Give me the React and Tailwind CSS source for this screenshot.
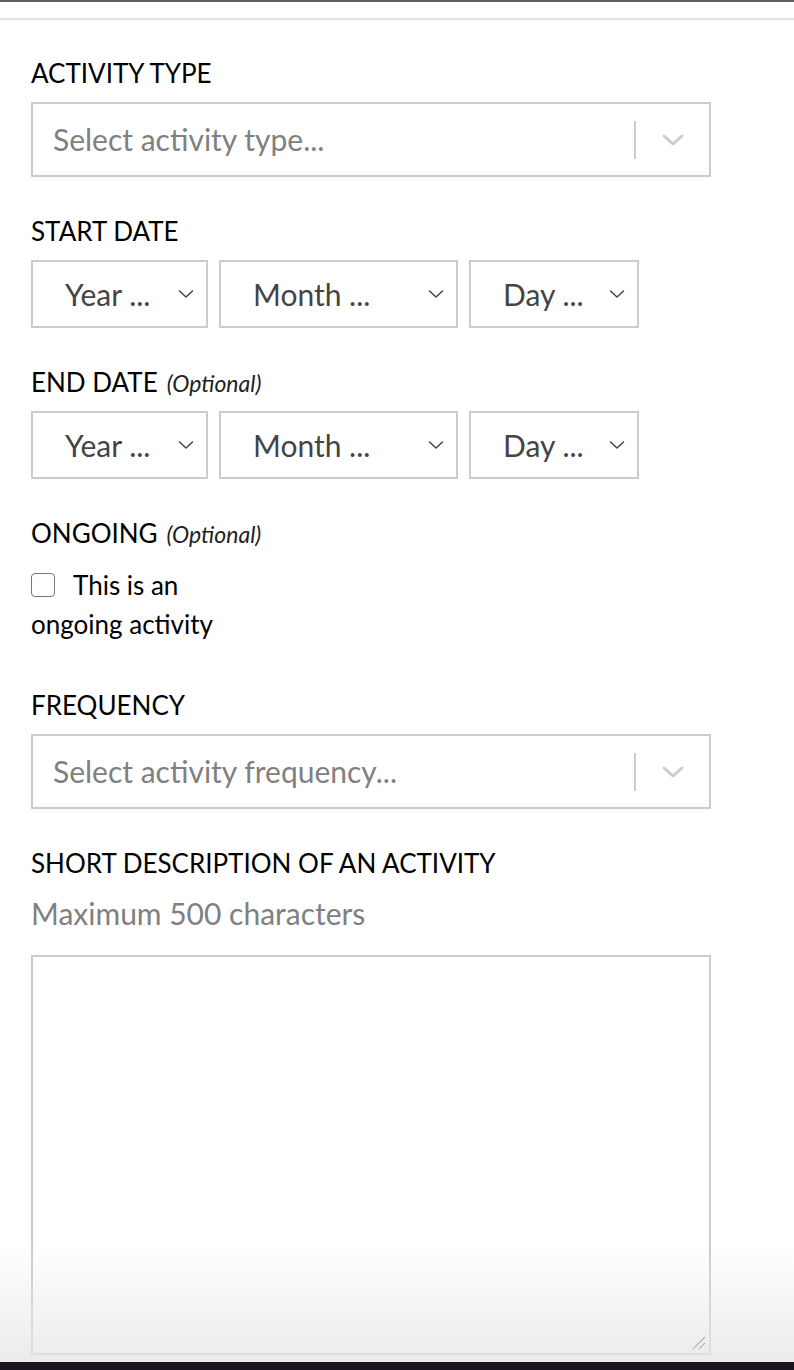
import React from "react";

const font = { fontFamily: "Lato, 'Open Sans', sans-serif" };

const Label = ({ children, optional }) => (
  <div className="h-[30px] leading-[30px] text-[26px] text-black flex items-baseline">
    <span>{children}</span>
    {optional && (
      <span className="ml-[9px] text-[23px] italic text-[#222]">(Optional)</span>
    )}
  </div>
);

const BigSelect = ({ placeholder }) => (
  <div className="w-[680px] h-[75px] border-2 border-[#cccccc] bg-white flex items-center">
    <div className="flex-1 pl-[20px] text-[30px] text-[#808080]">{placeholder}</div>
    <div className="w-[2px] h-[38px] bg-[#cccccc]" />
    <div className="w-[73px] flex justify-center">
      <svg width="22" height="12" viewBox="0 0 22 12" fill="none">
        <path d="M2 2l9 8 9-8" stroke="#cccccc" strokeWidth="3" strokeLinecap="round" strokeLinejoin="round" />
      </svg>
    </div>
  </div>
);

const SmallSelect = ({ text, w }) => (
  <div className={`${w} h-[68px] border-2 border-[#cccccc] bg-white flex items-center justify-between pl-[32px] pr-[12px]`}>
    <span className="text-[30px] text-[#444444]">{text}</span>
    <svg width="16" height="10" viewBox="0 0 16 10" fill="none">
      <path d="M1.5 2l6.5 6 6.5-6" stroke="#444444" strokeWidth="1.5" strokeLinecap="round" strokeLinejoin="round" />
    </svg>
  </div>
);

const DateRow = () => (
  <div className="flex gap-[11px]">
    <SmallSelect text="Year ..." w="w-[177px]" />
    <SmallSelect text="Month ..." w="w-[239px]" />
    <SmallSelect text="Day ..." w="w-[170px]" />
  </div>
);

export default function App() {
  return (
    <div className="relative h-[1370px] w-[794px] overflow-hidden bg-white" style={font}>
      <div className="h-[2px] bg-[#5f5f5f]" />
      <div className="mt-[16px] h-[2px] bg-[#e3e3e3]" />

      <div className="px-[31px] pt-[38px]">
        <Label>ACTIVITY TYPE</Label>
        <div className="mt-[14px]">
          <BigSelect placeholder="Select activity type..." />
        </div>

        <div className="mt-[39px]">
          <Label>START DATE</Label>
        </div>
        <div className="mt-[14px]">
          <DateRow />
        </div>

        <div className="mt-[39px]">
          <Label optional>END DATE</Label>
        </div>
        <div className="mt-[14px]">
          <DateRow />
        </div>

        <div className="mt-[39px]">
          <Label optional>ONGOING</Label>
        </div>
        <div className="mt-[18px] w-[220px] text-[26px] leading-[39px] text-black">
          <span className="inline-block w-[24px] h-[24px] border-[1.5px] border-[#777777] rounded-[4px] align-[-2px] mr-[18px]" />
          This is an ongoing activity
        </div>

        <div className="mt-[46px]">
          <Label>FREQUENCY</Label>
        </div>
        <div className="mt-[14px]">
          <BigSelect placeholder="Select activity frequency..." />
        </div>

        <div className="mt-[39px]">
          <Label>SHORT DESCRIPTION OF AN ACTIVITY</Label>
        </div>
        <div className="mt-[20px] h-[30px] leading-[30px] text-[30px] text-[#808080]">
          Maximum 500 characters
        </div>
        <div className="relative mt-[27px] w-[680px] h-[400px] border-2 border-[#cccccc] bg-white">
          <svg className="absolute right-[3px] bottom-[3px]" width="14" height="14" viewBox="0 0 14 14" fill="none">
            <path d="M1 13L13 1M7 13l6-6" stroke="#555555" strokeWidth="1.3" />
          </svg>
        </div>
      </div>

      <div className="pointer-events-none absolute left-0 right-0 bottom-[8px] h-[120px] bg-gradient-to-b from-white/0 to-[#e6e6e6]/80" />
      <div className="absolute left-0 right-0 bottom-0 h-[8px] bg-[#1c1422]" />
    </div>
  );
}
